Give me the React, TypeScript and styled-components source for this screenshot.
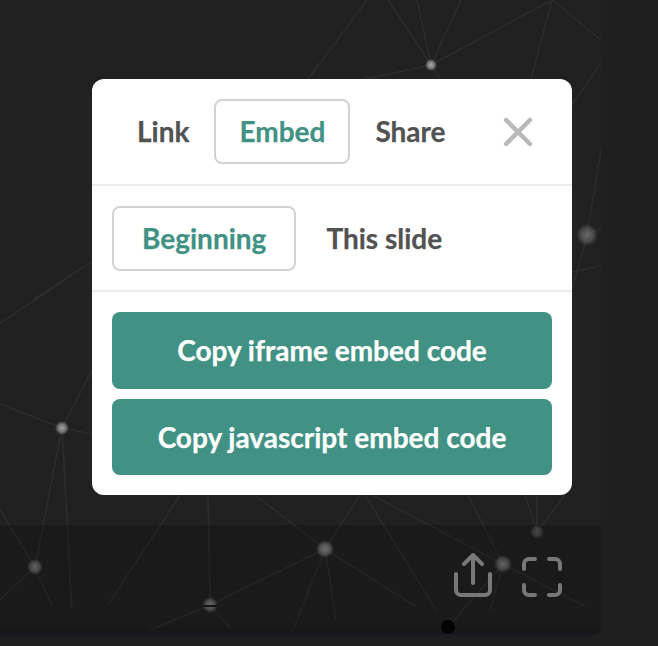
import React from "react";
import styled, { createGlobalStyle } from "styled-components";

const GlobalStyle = createGlobalStyle`
  html, body {
    margin: 0;
    padding: 0;
    height: 100%;
    background: #1f1f1f;
    font-family: "Lato", "Open Sans", sans-serif;
  }
`;

const Page = styled.div`
  width: 658px;
  height: 646px;
  overflow: hidden;
  background: #1f1f1f;
`;

const Slide = styled.div`
  position: relative;
  width: 601px;
  height: 636px;
  display: flex;
  flex-direction: column;
  justify-content: flex-end;
  overflow: hidden;
  background: #212121;
  border-bottom-right-radius: 10px;
`;

const Network = styled.svg`
  position: absolute;
  left: 0;
  top: 0;
`;

const ControlBar = styled.div`
  position: relative;
  height: 111px;
  box-sizing: border-box;
  padding: 28px 39px 0 0;
  display: flex;
  justify-content: flex-end;
  align-items: flex-start;
  gap: 30px;
  background: linear-gradient(
    rgba(0, 0, 0, 0.2) 0,
    rgba(0, 0, 0, 0.2) 102px,
    rgba(0, 0, 0, 0.28) 102px,
    rgba(0, 0, 0, 0.28) 108px,
    rgba(8, 12, 30, 0.35) 108px
  );
`;

const BarIcon = styled.svg<{ $offset?: number }>`
  display: block;
  margin-top: ${(p) => p.$offset ?? 0}px;
  fill: none;
  stroke: #787878;
  stroke-width: 4;
  stroke-linecap: round;
  stroke-linejoin: round;
`;

const Modal = styled.div`
  position: absolute;
  left: 92px;
  top: 79px;
  width: 480px;
  height: 416px;
  background: #fff;
  border-radius: 12px;
  overflow: hidden;
`;

const TabRow = styled.div<{ $height: number }>`
  display: flex;
  align-items: flex-start;
  height: ${(p) => p.$height}px;
  box-sizing: border-box;
  padding: 20px 20px 0;
  border-bottom: 2px solid #ececec;
`;

const Tab = styled.div<{ $active?: boolean; $wide?: boolean }>`
  box-sizing: border-box;
  height: 65px;
  padding: 0 ${(p) => (p.$wide ? 28 : 23)}px 2px;
  display: flex;
  align-items: center;
  font-size: 28px;
  font-weight: 700;
  -webkit-text-stroke: 0.25px currentColor;
  color: ${(p) => (p.$active ? "#419284" : "#525252")};
  border: 2px solid ${(p) => (p.$active ? "#d2d2d2" : "transparent")};
  border-radius: 8px;
`;

const CloseIcon = styled.svg`
  margin: 18px 19px 0 auto;
  stroke: #b9b9b9;
  stroke-width: 4.5;
  stroke-linecap: round;
`;

const Actions = styled.div`
  display: flex;
  flex-direction: column;
  gap: 10px;
  padding: 20px;
`;

const CopyButton = styled.div`
  height: 76.5px;
  display: flex;
  align-items: center;
  justify-content: center;
  background: #419284;
  border-radius: 8px;
  color: #fff;
  font-size: 28px;
  font-weight: 700;
  -webkit-text-stroke: 0.25px currentColor;
`;

const nodes: [number, number, number, number][] = [
  [431, 65, 6, 0.85],
  [587, 235, 11, 0.42],
  [62, 428, 7, 0.8],
  [35, 567, 8, 0.55],
  [210, 605, 8, 0.6],
  [325, 549, 9, 0.65],
  [503, 564, 9, 0.55],
  [537, 532, 7, 0.35],
];

const links: [number, number, number, number][] = [
  [431, 65, 388, 0],
  [431, 65, 417, 0],
  [431, 65, 461, 0],
  [431, 65, 552, 0],
  [431, 65, 365, 79],
  [431, 65, 440, 79],
  [367, 0, 308, 79],
  [552, 0, 531, 79],
  [552, 0, 601, 40],
  [601, 63, 572, 105],
  [587, 235, 601, 150],
  [587, 235, 601, 228],
  [587, 235, 572, 290],
  [572, 272, 601, 266],
  [91, 262, 33, 300],
  [65, 280, 0, 323],
  [0, 404, 62, 428],
  [62, 428, 92, 434],
  [62, 428, 92, 370],
  [62, 428, 35, 567],
  [62, 428, 72, 610],
  [0, 510, 35, 567],
  [35, 567, 0, 600],
  [35, 567, 52, 606],
  [180, 495, 108, 605],
  [208, 495, 210, 605],
  [210, 605, 150, 630],
  [210, 605, 232, 630],
  [255, 495, 325, 549],
  [360, 495, 325, 549],
  [325, 549, 210, 605],
  [325, 549, 293, 630],
  [325, 549, 336, 620],
  [325, 549, 415, 606],
  [365, 495, 436, 610],
  [372, 495, 503, 564],
  [503, 564, 585, 606],
  [468, 495, 503, 564],
  [503, 564, 448, 627],
  [503, 564, 490, 610],
  [537, 532, 525, 495],
  [537, 532, 537, 495],
  [537, 532, 565, 495],
];

const App = () => {
  return (
    <Page>
      <GlobalStyle />
      <Slide>
        <Network width="601" height="636">
          <defs>
            <radialGradient id="glow">
              <stop offset="0%" stopColor="#bdbdbd" />
              <stop offset="55%" stopColor="#8a8a8a" />
              <stop offset="100%" stopColor="#8a8a8a" stopOpacity="0" />
            </radialGradient>
          </defs>
          <g stroke="#2d2d2d" strokeWidth="1.5">
            {links.map(([x1, y1, x2, y2], i) => (
              <line key={i} x1={x1} y1={y1} x2={x2} y2={y2} />
            ))}
          </g>
          {nodes.map(([cx, cy, r, o], i) => (
            <circle key={i} cx={cx} cy={cy} r={r} fill="url(#glow)" opacity={o} />
          ))}
          <rect x="203" y="605" width="14" height="2" fill="#1a1a1a" />
          <circle cx="448" cy="627" r="7" fill="#050505" />
        </Network>
        <ControlBar>
          <BarIcon width="38" height="44" viewBox="0 0 38 44">
            <path d="M19 30V2M10 11l9-9 9 9" />
            <path d="M2 21v16a5 5 0 0 0 5 5h24a5 5 0 0 0 5-5V21" />
          </BarIcon>
          <BarIcon $offset={4} width="40" height="40" viewBox="0 0 40 40">
            <path d="M2 12V7a5 5 0 0 1 5-5h6M27 2h6a5 5 0 0 1 5 5v5M38 28v5a5 5 0 0 1-5 5h-6M13 38H7a5 5 0 0 1-5-5v-5" />
          </BarIcon>
        </ControlBar>
      </Slide>
      <Modal>
        <TabRow $height={107}>
          <Tab>Link</Tab>
          <Tab $active>Embed</Tab>
          <Tab>Share</Tab>
          <CloseIcon width="30" height="30" viewBox="0 0 30 30">
            <path d="M3 3l24 24M27 3 3 27" />
          </CloseIcon>
        </TabRow>
        <TabRow $height={106}>
          <Tab $active $wide>Beginning</Tab>
          <Tab $wide>This slide</Tab>
        </TabRow>
        <Actions>
          <CopyButton>Copy iframe embed code</CopyButton>
          <CopyButton>Copy javascript embed code</CopyButton>
        </Actions>
      </Modal>
    </Page>
  );
};

export default App;
